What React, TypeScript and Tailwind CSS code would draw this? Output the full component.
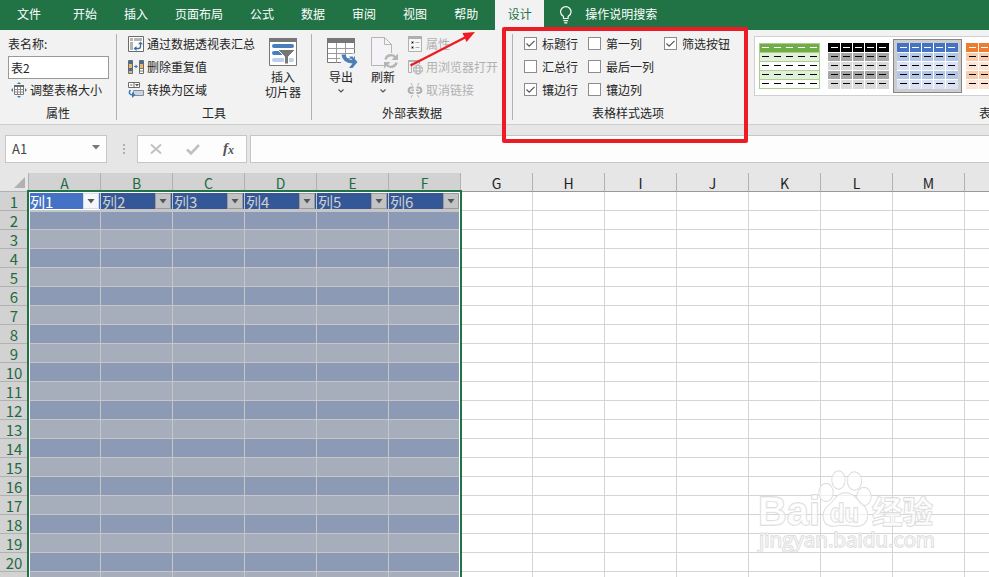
import type { ReactNode } from "react";
import clsx from "clsx";

const tabs = ["文件", "开始", "插入", "页面布局", "公式", "数据", "审阅", "视图", "帮助"];
const columns = ["A", "B", "C", "D", "E", "F", "G", "H", "I", "J", "K", "L", "M", ""];
const rows = Array.from({ length: 20 }, (_, i) => String(i + 1)).concat("");
const TABLE_COLS = 6;

type Swatch = { head: string; odd: string; even: string; line?: string; selected?: boolean };

const swatches: Swatch[] = [
  { head: "#70ad47", odd: "#e2efda", even: "#ffffff", line: "#a9d08e" },
  { head: "#000000", odd: "#a6a6a6", even: "#d9d9d9" },
  { head: "#4472c4", odd: "#b4c6e7", even: "#d9e1f2", selected: true },
  { head: "#ed7d31", odd: "#f8cbad", even: "#fce4d6" },
];

function Bulb() {
  return (
    <svg width="14" height="18" viewBox="0 0 14 18" fill="none" stroke="#fff" strokeWidth="1.2">
      <path d="M4.5 12.5v-2C2.500 9 1.500 7.800 1.500 6a5.300 5.300 0 0 1 10.600 0c0 1.800-1 3-3 4.500v2z" />
      <path d="M4.500 14.600h4.600M5.300 16.800h3" />
    </svg>
  );
}

function ResizeIcon() {
  return (
    <svg width="16" height="16" viewBox="0 0 16 16">
      <path d="M3.500 3.500h9v9h-9z" fill="#fff" stroke="#7a7a7a" />
      <path d="M3 3h10v2H3z" fill="#6a6a6a" />
      <path d="M6.500 5v7M9.500 5v7M4 7.500h8M4 10h8" stroke="#8a8a8a" />
      <path d="M8 0l2 2H6zM8 16l2-2H6zM0 8l2-2v4zM16 8l-2-2v4z" fill="#3d7ab8" />
    </svg>
  );
}

function PivotIcon() {
  return (
    <svg width="16" height="16" viewBox="0 0 16 16">
      <path d="M.5.5h15v15H.5z" fill="#fff" stroke="#6a6a6a" />
      <path d="M2 2h3v3H2zM6 2h8v3H6zM2 6h3v8H2z" fill="#b4b4b4" />
      <path d="M12.500 7v3.500q0 2-2 2H7" fill="none" stroke="#3d6fa5" strokeWidth="1.400" />
      <path d="M10 8.300L12.500 5.500 15 8.300zM8.500 10v5L5.500 12.500z" fill="#3d6fa5" />
    </svg>
  );
}

function DuplicatesIcon() {
  return (
    <svg width="16" height="14" viewBox="0 0 16 14">
      <path d="M.5.5h4v13h-4zM11.500.5h4v13h-4z" fill="#fff" stroke="#6a6a6a" />
      <path d="M1 1h3v3H1zM1 8h3v3H1zM12 1h3v3h-3z" fill="#3d6fa5" />
      <path d="M1 4h3v4H1zM1 11h3v2H1zM12 4h3v4h-3z" fill="#e9b765" />
      <path d="M12 8.500h3M12 11h3" stroke="#777" />
      <path d="M6 6.500h3" stroke="#3d7ab8" />
      <path d="M7.500 4.500l2.500 2-2.500 2z" fill="#3d7ab8" />
    </svg>
  );
}

function ConvertIcon() {
  return (
    <svg width="16" height="16" viewBox="0 0 16 16">
      <path d="M.5.5h11v5H.5zM6 .5v5" fill="#fff" stroke="#6a6a6a" />
      <path d="M2 3h2.500" stroke="#777" />
      <path d="M7 2h4L9 4.500z" fill="#555" />
      <path d="M5.500 8.500h10v5h-10z" fill="#c5d5ea" stroke="#8a8a8a" />
      <path d="M2.500 8C0 11 2 13 5 13" fill="none" stroke="#3d7ab8" strokeWidth="1.500" />
      <path d="M4 10l3.500 3L4 16z" fill="#3d7ab8" />
    </svg>
  );
}

function SlicerIcon() {
  return (
    <svg width="28" height="28" viewBox="0 0 28 28">
      <path d="M.5.5h27v27H.5z" fill="#fff" stroke="#777" />
      <path d="M0 0h28v4H0z" fill="#777" />
      <rect x="3" y="6" width="22" height="4" rx="2" fill="#4a7ebb" />
      <rect x="3" y="13" width="15" height="4" rx="2" fill="#4a7ebb" />
      <rect x="3" y="20" width="22" height="4" rx="2" fill="#bcd0e9" />
      <path d="M8.500 11.500h18l-7 7V26h-4v-7.500z" fill="#777" stroke="#fff" />
    </svg>
  );
}

function ExportIcon() {
  return (
    <svg width="31" height="31" viewBox="0 0 31 31">
      <path d="M.5.5h27v24H.5z" fill="#fff" stroke="#777" />
      <path d="M0 0h28v5H0z" fill="#777" />
      <path d="M9.500 5v20M18.500 5v20M1 10.500h27M1 15.500h27M1 20.500h27" stroke="#9a9a9a" />
      <path d="M13.500 16.500q1 7.500 8 7.500h9v-7h-5M14 25h7v6" fill="none" stroke="#f2f2f2" strokeWidth="3" />
      <path d="M14.500 16.500h4q1 5 7 5.500L22 18.500h3.500l5 5.500-5 6H22l3.500-4.500q-10-.500-11-9z" fill="#4a7ebb" />
    </svg>
  );
}

function RefreshIcon() {
  return (
    <svg width="29" height="32" viewBox="0 0 29 32" fill="none">
      <path d="M1.500.5h13l7 7v21h-20z" fill="#f5f3f7" stroke="#b5b5b5" />
      <path d="M14.500.5v7h7" stroke="#b5b5b5" />
      <circle cx="21" cy="24" r="8" fill="#f2f2f2" />
      <path d="M15.500 22.500a5.600 5.600 0 0 1 10-2M26.500 25.500a5.600 5.600 0 0 1-10 2" stroke="#b5b5b5" strokeWidth="2.400" />
      <path d="M28 16.500v6.500h-6.500zM14 31.500V25h6.500z" fill="#b5b5b5" />
    </svg>
  );
}

function PropertiesIcon() {
  return (
    <svg width="14" height="16" viewBox="0 0 14 16">
      <path d="M.5.5h13v15H.5z" fill="#f7f7f7" stroke="#b0b0b0" />
      <path d="M0 0h14v3H0z" fill="#b0b0b0" />
      <path d="M3.500 5.500H5.500V7.500H3.500zM3.500 10.500H5.500V12.500H3.500z" stroke="#b0b0b0" />
      <path d="M7.500 6.500h4M7.500 11.500h4" stroke="#b0b0b0" />
    </svg>
  );
}

function BrowserIcon() {
  return (
    <svg width="16" height="16" viewBox="0 0 16 16" fill="none" stroke="#b0b0b0">
      <path d="M5 13.500H1.500V1.500h11V5M1 2.500h12M4.500 4v9" />
      <circle cx="11" cy="10.500" r="4.500" fill="#f2f2f2" />
      <ellipse cx="11" cy="10.500" rx="2" ry="4.500" />
      <path d="M6.500 9h9M6.500 12h9" />
    </svg>
  );
}

function UnlinkIcon() {
  return (
    <svg width="16" height="16" viewBox="0 0 16 16" fill="none" stroke="#b0b0b0">
      <path d="M6.500 5.500H4a2.800 2.800 0 0 0 0 5.500h2.500M9.500 5.500H12a2.800 2.800 0 0 1 0 5.500H9.500" strokeWidth="2.200" />
      <path d="M4.500 8.200H7M9 8.200h2.500" strokeWidth="1.500" />
      <path d="M4 1l1.500 2.500M12 1l-1.500 2.500M4 15.500L5.500 13M12 15.500L10.500 13" />
    </svg>
  );
}

function Chevron() {
  return (
    <svg width="6" height="4" viewBox="0 0 6 4" className="mt-1">
      <path d="M.5.5L3 3 5.500.5" fill="none" stroke="#555" strokeWidth="1.200" />
    </svg>
  );
}

function Command({ icon, label, disabled }: { icon: ReactNode; label: string; disabled?: boolean }) {
  return (
    <div className={clsx("flex h-[23px] items-center gap-[3px] whitespace-nowrap", disabled && "text-[#b1b1b1]")}>
      <span className="flex w-4 justify-center">{icon}</span>
      {label}
    </div>
  );
}

function Group({ title, className, children }: { title: string; className: string; children: ReactNode }) {
  return (
    <section className={clsx("flex shrink-0 flex-col", className)}>
      <div className="flex h-[73px] pt-[2px]">{children}</div>
      <div className="h-5 text-center leading-5">{title}</div>
    </section>
  );
}

function Separator() {
  return <div className="mt-1 h-[86px] w-px shrink-0 bg-[#b1b1b1]" />;
}

function Option({ label, checked }: { label: string; checked?: boolean }) {
  return (
    <label className="flex h-[23px] items-center gap-[5px] whitespace-nowrap">
      <span className="flex h-[13px] w-[13px] items-center justify-center border border-[#8c8c8c] bg-white">
        {checked && (
          <svg width="11" height="11" viewBox="0 0 11 11">
            <path d="M1.500 5.500l2.700 2.700L9.500 2.800" fill="none" stroke="#555" strokeWidth="1.200" />
          </svg>
        )}
      </span>
      {label}
    </label>
  );
}

// cell widths are 12/11/11/11/12 with a one pixel gap
const cellX = [0, 13, 25, 37, 49];
const cellW = [12, 11, 11, 11, 12];
const cellY = [0, 10, 19, 28, 37];
const cellH = [9, 8, 8, 8, 9];

function StyleSwatch({ swatch }: { swatch: Swatch }) {
  const fill = (r: number) => (r === 0 ? swatch.head : r % 2 ? swatch.odd : swatch.even);
  return (
    <div
      className={clsx(
        "flex h-[54px] w-[69px] shrink-0 items-start justify-center border pt-[3px]",
        swatch.selected ? "border-[#868686] bg-[#cdcdcd]" : "border-transparent",
      )}
    >
      <svg width="61" height="46" viewBox="0 0 61 46" shapeRendering="crispEdges" className="shrink-0">
        <rect width="61" height="46" fill={swatch.line ?? "#fff"} />
        {cellY.map((y, r) =>
          swatch.line ? (
            <rect key={r} x="1" y={r ? y : 1} width="59" height={8} fill={fill(r)} />
          ) : (
            cellX.map((x, c) => <rect key={`${r}-${c}`} x={x} y={y} width={cellW[c]} height={cellH[r]} fill={fill(r)} />)
          ),
        )}
        {cellY.map((_, r) =>
          cellX.map((_, c) => (
            <rect key={`${r}-${c}`} x={3 + c * 12} y={4 + r * 9} width="7" height="1" fill={r ? "#000" : "#fff"} />
          )),
        )}
      </svg>
    </div>
  );
}

function Ribbon() {
  return (
    <div className="flex h-[95px] overflow-hidden border-b border-[#cfcfcf] bg-[#f2f2f2]">
      <Group title="属性" className="w-[116px]">
        <div className="flex flex-col pl-2">
          <div className="h-6 leading-[23px]">表名称:</div>
          <div className="h-[23px] w-[101px] border border-[#999] bg-white pl-0.5 leading-[21px]">表2</div>
          <div className="-mt-px pl-[3px]">
            <Command icon={<ResizeIcon />} label="调整表格大小" />
          </div>
        </div>
      </Group>
      <Separator />
      <Group title="工具" className="w-[194px]">
        <div className="w-[147px] pl-[11px]">
          <Command icon={<PivotIcon />} label="通过数据透视表汇总" />
          <Command icon={<DuplicatesIcon />} label="删除重复值" />
          <Command icon={<ConvertIcon />} label="转换为区域" />
        </div>
        <div className="flex w-[38px] flex-col items-center pt-[6px] text-center leading-[15px]">
          <SlicerIcon />
          <div className="mt-[3px] whitespace-nowrap">插入</div>
          <div className="whitespace-nowrap">切片器</div>
        </div>
      </Group>
      <Separator />
      <Group title="外部表数据" className="w-[200px]">
        <div className="ml-[14px] flex w-[30px] flex-col items-center pt-[6px]">
          <div className="-mr-[3px]">
            <ExportIcon />
          </div>
          <span className="whitespace-nowrap leading-4">导出</span>
          <Chevron />
        </div>
        <div className="ml-3 flex w-[30px] flex-col items-center pt-[5px]">
          <div className="pl-[3px]">
            <RefreshIcon />
          </div>
          <span className="whitespace-nowrap leading-4">刷新</span>
          <Chevron />
        </div>
        <div className="ml-[9px]">
          <Command disabled icon={<PropertiesIcon />} label="属性" />
          <Command disabled icon={<BrowserIcon />} label="用浏览器打开" />
          <Command disabled icon={<UnlinkIcon />} label="取消链接" />
        </div>
      </Group>
      <Separator />
      <Group title="表格样式选项" className="w-[230px]">
        <div className="grid grid-cols-[64px_76px_70px] content-start pl-[11px]">
          <Option label="标题行" checked />
          <Option label="第一列" />
          <Option label="筛选按钮" checked />
          <Option label="汇总行" />
          <Option label="最后一列" />
          <span />
          <Option label="镶边行" checked />
          <Option label="镶边列" />
        </div>
      </Group>
      <section className="ml-[11px] w-[235px] shrink-0">
        <div className="mt-1.5 flex h-[60px] items-start overflow-hidden border border-r-0 border-[#d0d0d0] bg-white pt-0.5">
          {swatches.map((s) => (
            <StyleSwatch key={s.head} swatch={s} />
          ))}
        </div>
        <div className="mt-[7px] w-[300px] pl-[225px] leading-5">表</div>
      </section>
    </div>
  );
}

function FormulaBar() {
  return (
    <div className="flex h-12 items-start bg-[#e6e6e6] pl-[5px] pt-2.5">
      <div className="flex h-7 w-[102px] items-center justify-between border border-[#c6c6c6] bg-[#fdfdfd] pl-1.5 pr-1.5 text-[13px] text-[#444]">
        A1
        <svg width="8" height="5" viewBox="0 0 8 5" className="-mt-[3px]">
          <path d="M0 0h8L4 4.500z" fill="#777" />
        </svg>
      </div>
      <div className="flex h-7 w-[30px] flex-col items-center justify-center gap-0.5 pl-1">
        <i className="h-0.5 w-0.5 bg-[#b0b0b0]" />
        <i className="h-0.5 w-0.5 bg-[#b0b0b0]" />
        <i className="h-0.5 w-0.5 bg-[#b0b0b0]" />
      </div>
      <div className="flex h-7 w-[110px] items-center border border-[#c6c6c6] bg-[#fdfdfd]">
        <svg width="108" height="26" viewBox="0 0 108 26" fill="none" stroke="#c0c0c0">
          <path d="M13 8.500l10 9M23 8.500l-10 9" strokeWidth="1.800" />
          <path d="M49 13.500l4 4 8-8.500" strokeWidth="2.600" />
          <text x="85" y="17" fill="#555" stroke="none" className="font-['Liberation_Serif',serif] text-[15px] font-bold italic">
            f
          </text>
          <text x="90" y="18" fill="#555" stroke="none" className="font-['Liberation_Serif',serif] text-[12px] font-bold italic">
            x
          </text>
        </svg>
      </div>
      <div className="ml-[3px] h-7 flex-1 border border-r-0 border-[#c6c6c6] bg-[#fdfdfd]" />
    </div>
  );
}

function HeaderCell({ index }: { index: number }) {
  const active = index === 0;
  return (
    <div
      className={clsx(
        "flex h-[17px] flex-1 border-b text-[15px]",
        active ? "border-white bg-[#4472c4] text-white" : "border-[#c6c6c6] bg-[#345797] text-[#cfcfcf]",
      )}
    >
      <span className="h-4 flex-1 whitespace-nowrap pl-px leading-[17px]">列{index + 1}</span>
      <span
        className={clsx(
          "mr-px flex h-4 w-4 items-center justify-center border",
          active ? "border-[#d5dae3] bg-[#f4f6fa]" : "border-[#9a9a9a] bg-[#c2c3c5]",
        )}
      >
        <svg width="8" height="5" viewBox="0 0 8 5">
          <path d="M.5 0h7L4 4.500z" fill="#555" />
        </svg>
      </span>
    </div>
  );
}

function Sheet() {
  return (
    <div className="relative h-[404px] overflow-hidden bg-white">
      <div className="flex h-[19px] bg-[#e6e6e6] text-[14px] leading-[21px]">
        <div className="flex w-[29px] shrink-0 items-end justify-end border-b border-r border-[#b1b1b1] pb-[3px] pr-[3px]">
          <svg width="11" height="11" viewBox="0 0 11 11">
            <path d="M11 0v11H0z" fill="#b1b1b1" />
          </svg>
        </div>
        {columns.map((c, i) => (
          <div
            key={i}
            className={clsx(
              "w-[72px] shrink-0 border-b border-r text-center",
              i < TABLE_COLS
                ? "border-[#b1b1b1] bg-[#d2d2d2] text-[#1e6b43]"
                : "border-b-[#999] border-r-[#b1b1b1] text-[#222]",
            )}
          >
            {c}
          </div>
        ))}
      </div>
      {rows.map((label, ri) => {
        const r = ri + 1;
        return (
          <div key={r} className="flex h-[19px]">
            <div className="w-[29px] shrink-0 border-b border-r border-[#b1b1b1] bg-[#d2d2d2] text-center text-[15px] leading-5 text-[#1e6b43]">
              {label}
            </div>
            {columns.map((_, i) => {
              const inTable = i < TABLE_COLS;
              return (
                <div
                  key={i}
                  className={clsx(
                    "flex w-[72px] shrink-0 items-start border-b border-r",
                    !inTable && "border-[#d4d4d4]",
                    inTable && "border-[#c6c6c6]",
                    inTable && r === 1 && "bg-[#c6c6c6] pt-px",
                    inTable && r > 1 && (r % 2 ? "bg-[#a7aebb]" : "bg-[#8c9ab5]"),
                    inTable && r === 2 && "border-t",
                  )}
                >
                  {inTable && r === 1 && <HeaderCell index={i} />}
                </div>
              );
            })}
          </div>
        );
      })}
      {/* selection outline */}
      <div className="absolute left-[27px] top-[17px] h-[400px] w-[435px] border-2 border-[#217346]">
        <div className="h-full w-full border border-b-0 border-white" />
      </div>
      <Watermark />
    </div>
  );
}

function Watermark() {
  return (
    <svg
      className="absolute left-[750px] top-[290px]"
      width="200"
      height="100"
      viewBox="0 0 200 100"
      fill="#fff"
      fillOpacity="0.65"
      stroke="#d8d8d8"
      strokeWidth="1.300"
      paintOrder="stroke"
    >
      <text x="8" y="62" textLength="62" lengthAdjust="spacingAndGlyphs" className="font-['Liberation_Sans',sans-serif] text-[40px] font-bold">
        Bai
      </text>
      <ellipse cx="76" cy="29.500" rx="7" ry="9" />
      <ellipse cx="88.500" cy="17" rx="6.500" ry="9" />
      <ellipse cx="104.500" cy="18" rx="7" ry="9" />
      <ellipse cx="114" cy="33.500" rx="7" ry="9" />
      <path d="M95 30c-8 0-10 7-16 12-8 6-8 20 3 21 6 0 8-1 13-1s8 2 14 1c10-2 11-14 4-21-6-5-9-12-18-12z" />
      <text x="80" y="59" textLength="29" lengthAdjust="spacingAndGlyphs" className="font-['Liberation_Sans',sans-serif] text-[25px] font-bold">
        du
      </text>
      <text x="122" y="60" textLength="61" lengthAdjust="spacingAndGlyphs" className="font-['Noto_Sans_CJK_SC',sans-serif] text-[31px] font-bold">
        经验
      </text>
      <text x="9" y="84" textLength="176" lengthAdjust="spacingAndGlyphs" className="font-['Open_Sans',sans-serif] text-[20px]">
        jingyan.baidu.com
      </text>
    </svg>
  );
}

export default function App() {
  return (
    <div className="relative h-[577px] w-[989px] overflow-hidden bg-[#e6e6e6] font-['Noto_Sans_CJK_SC',sans-serif] text-[12px] text-[#262626]">
      <nav className="flex h-[30px] bg-[#217346] leading-[28px] text-white">
        {tabs.map((t, i) => (
          <div key={t} className={clsx("shrink-0", i === 0 ? "pl-[17px] pr-[18.5px]" : "px-[13.5px]")}>
            {t}
          </div>
        ))}
        <div className="ml-[3.5px] w-[49px] bg-[#f2f2f2] text-center text-[#217346]">设计</div>
        <div className="ml-[15px] flex gap-3">
          <span className="pt-1.5">
            <Bulb />
          </span>
          操作说明搜索
        </div>
      </nav>
      <Ribbon />
      <FormulaBar />
      <Sheet />

      {/* callout box and arrow */}
      <div className="absolute left-[502px] top-[27px] h-[116px] w-[246px] rounded-[2px] border-4 border-[#ed1c24]" />
      <svg className="absolute left-[405px] top-[27px]" width="75" height="45" viewBox="0 0 75 45">
        <path d="M5.500 38.500L60 10.500" stroke="#ed1c24" strokeWidth="2.400" />
        <path d="M70 5L61.500 15 57.500 6z" fill="#ed1c24" />
      </svg>
    </div>
  );
}
